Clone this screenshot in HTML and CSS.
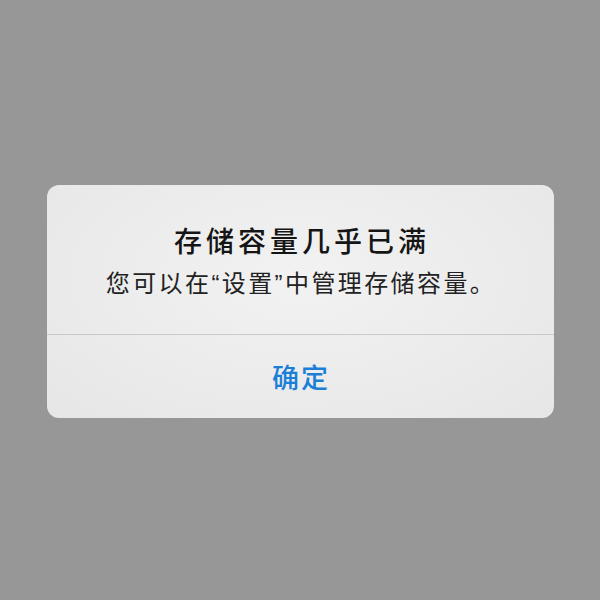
FILE: index.html
```html
<!DOCTYPE html>
<html lang="zh-CN">
<head>
  <meta charset="UTF-8">
  <meta name="viewport" content="width=device-width, initial-scale=1.0">
  <title>存储容量几乎已满</title>
  <link rel="stylesheet" href="styles.css">
</head>
<body>
  <div class="overlay">
    <div class="alert">
      <div class="alert-body">
        <div class="alert-title">存储容量几乎已满</div>
        <div class="alert-message">您可以在“设置”中管理存储容量。</div>
      </div>
      <button class="alert-btn">确定</button>
    </div>
  </div>
</body>
</html>
```

FILE: styles.css
```css
* {
  margin: 0;
  padding: 0;
  box-sizing: border-box;
}

body {
  font-family: "Noto Sans CJK SC", "Noto Sans", sans-serif;
  background: #979797;
  height: 100vh;
  overflow: hidden;
}

.overlay {
  height: 100vh;
  padding-top: 185px;
  display: flex;
  justify-content: center;
  align-items: flex-start;
}

.alert {
  width: 507px;
  height: 233px;
  background: radial-gradient(ellipse at 50% 40%, #f2f2f2 0%, #ebebeb 60%, #e6e6e6 100%);
  border-radius: 12px;
  display: flex;
  flex-direction: column;
  overflow: hidden;
}

.alert-body {
  padding: 37px 20px 0;
  height: 150px;
  border-bottom: 1px solid #c9c9c9;
  text-align: center;
}

.alert-title {
  font-size: 28px;
  line-height: 36px;
  font-weight: 500;
  letter-spacing: 4px;
  padding-left: 4px;
  color: #151515;
}

/* latin font first so the curly quotes stay narrow */
.alert-message {
  margin-top: 9px;
  font-family: "Liberation Sans", "Noto Sans CJK SC", sans-serif;
  font-size: 24px;
  line-height: 34px;
  letter-spacing: 2.4px;
  padding-left: 2px;
  color: #222;
}

.alert-btn {
  flex: 1;
  border: none;
  background: none;
  font-family: inherit;
  font-size: 27px;
  font-weight: 500;
  letter-spacing: 2px;
  padding-left: 2px;
  color: #1b7fd8;
  cursor: pointer;
}
```
